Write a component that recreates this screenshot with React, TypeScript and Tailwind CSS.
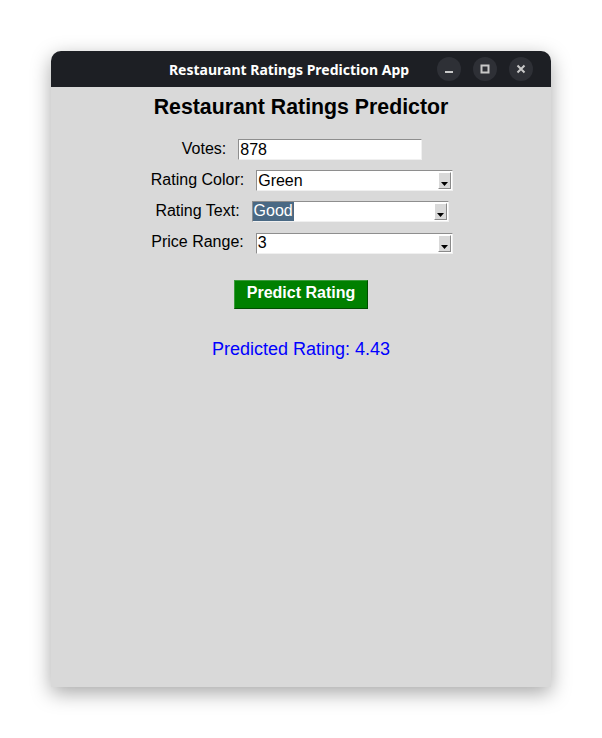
const labelCls = "mb-[2px] text-[16px] leading-[18px] text-black";

function Arrow() {
    return (
        <div className="absolute right-[1px] top-[1px] bottom-[1px] w-[13px] bg-[#d9d9d9] border border-t-white border-l-white border-b-[#8a8a8a] border-r-[#8a8a8a] flex items-end justify-center pb-[2px]">
            <svg width="7" height="4" viewBox="0 0 7 4">
                <polygon points="0,0 7,0 3.5,4" fill="#000" />
            </svg>
        </div>
    );
}

function Combo({ value, selected }: { value: string; selected?: boolean }) {
    return (
        <div className="relative w-[197px] h-[21px] bg-white border border-t-[#8e8e8e] border-l-[#8e8e8e] border-b-[#f0f0f0] border-r-[#f0f0f0] flex items-center">
            <span className={selected ? "ml-[0px] h-[19px] px-[1px] bg-[#4a6984] text-white text-[16px] leading-[18px]" : "ml-[1px] text-[16px] leading-[18px] text-black"}>
                {value}
            </span>
            <Arrow />
        </div>
    );
}

export default function App() {
    return (
        <div className="w-[602px] h-[738px] bg-white pt-[51px] pl-[51px] font-['Liberation_Sans',Arial,sans-serif]">
            <div className="w-[500px] h-[636px] flex flex-col rounded-t-[10px] overflow-hidden shadow-[0_6px_20px_rgba(0,0,0,0.35)] bg-[#d9d9d9]">

                {/* title bar */}
                <div className="h-[36px] bg-[#1d1f24] flex items-center relative">
                    <span className="absolute left-0 right-[24px] text-center whitespace-nowrap font-['Noto_Sans',sans-serif] font-bold text-[14px] text-white">
                        Restaurant Ratings Prediction App
                    </span>
                    <div className="ml-auto mr-[18px] flex gap-[12px]">
                        <div className="w-[24px] h-[24px] rounded-full bg-[#2e3036] flex items-center justify-center">
                            <svg width="10" height="10" viewBox="0 0 10 10"><rect x="1" y="7" width="8" height="2" fill="#c8c8c8" /></svg>
                        </div>
                        <div className="w-[24px] h-[24px] rounded-full bg-[#2e3036] flex items-center justify-center">
                            <svg width="10" height="10" viewBox="0 0 10 10"><rect x="1.5" y="1.5" width="7" height="7" fill="none" stroke="#c8c8c8" strokeWidth="2" /></svg>
                        </div>
                        <div className="w-[24px] h-[24px] rounded-full bg-[#2e3036] flex items-center justify-center">
                            <svg width="10" height="10" viewBox="0 0 10 10"><path d="M1.5 1.5 L8.5 8.5 M8.5 1.5 L1.5 8.5" stroke="#c8c8c8" strokeWidth="2" /></svg>
                        </div>
                    </div>
                </div>

                {/* body */}
                <div className="flex flex-col items-center">
                    <h1 className="mt-[8px] text-[21.3px] leading-[24px] font-bold text-black">Restaurant Ratings Predictor</h1>

                    <div className="mt-[20px] pl-[2px] flex items-center gap-[12px] h-[21px]">
                        <span className={labelCls}>Votes:</span>
                        <div className="w-[184px] h-[21px] bg-white border border-t-[#8e8e8e] border-l-[#8e8e8e] border-b-[#f0f0f0] border-r-[#f0f0f0] flex items-center">
                            <span className="ml-[1px] text-[16px] leading-[18px] text-black">878</span>
                        </div>
                    </div>

                    <div className="mt-[10px] pl-[2px] flex items-center gap-[12px] h-[21px]">
                        <span className={labelCls}>Rating Color:</span>
                        <Combo value="Green" />
                    </div>

                    <div className="mt-[10px] pl-[2px] flex items-center gap-[12px] h-[21px]">
                        <span className={labelCls}>Rating Text:</span>
                        <Combo value="Good" selected />
                    </div>

                    <div className="mt-[10px] pl-[2px] flex items-center gap-[12px] h-[22px]">
                        <span className={labelCls}>Price Range:</span>
                        <Combo value="3" />
                    </div>

                    <button className="mt-[26px] w-[134px] h-[29px] pb-[4px] bg-[#008000] border border-t-[#3a9a3a] border-l-[#3a9a3a] border-b-[#004d00] border-r-[#004d00] text-white font-bold text-[16px] leading-[18px]">
                        Predict Rating
                    </button>

                    <p className="mt-[30px] text-[18px] leading-[21px] text-[#0000ff]">Predicted Rating: 4.43</p>
                </div>
            </div>
        </div>
    );
}
